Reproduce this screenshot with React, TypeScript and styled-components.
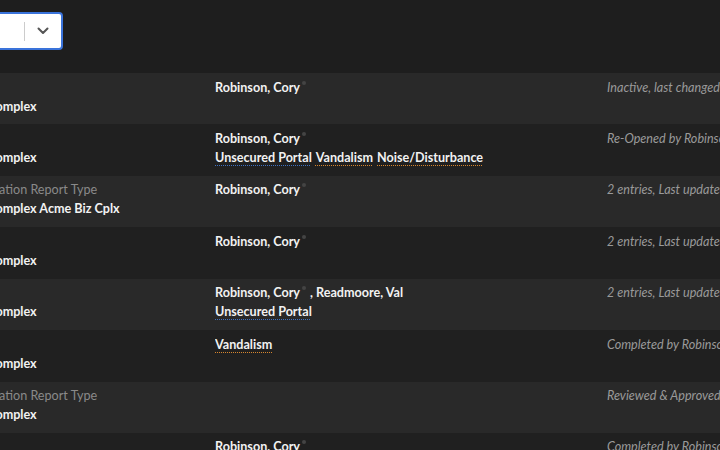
import React from "react";
import styled, { createGlobalStyle } from "styled-components";

const Global = createGlobalStyle`
  html, body {
    margin: 0;
    padding: 0;
    background: #1e1e1e;
    overflow: hidden;
  }
  body {
    font-family: Lato, "Open Sans", "Liberation Sans", sans-serif;
    width: 720px;
    height: 450px;
  }
`;

const Page = styled.div`
  width: 720px;
  height: 450px;
  overflow: hidden;
  background: #1e1e1e;
`;

const Toolbar = styled.div`
  padding: 12px 0 23px;
  margin-left: -120px;
  display: flex;
`;

const Select = styled.div`
  width: 183px;
  height: 38px;
  box-sizing: border-box;
  background: #ffffff;
  border: 2px solid #3a73da;
  border-radius: 4px;
  display: flex;
  align-items: center;
  justify-content: flex-end;
`;

const Divider = styled.span`
  width: 1px;
  height: 19px;
  background: #cccccc;
`;

const Chevron = styled.span`
  width: 36px;
  display: flex;
  justify-content: center;
  align-items: center;
  color: #555555;
`;

const Table = styled.div`
  margin-left: -68px;
  width: 1100px;
`;

const Row = styled.div<{ $alt: boolean }>`
  display: grid;
  grid-template-columns: 283px 392px 1fr;
  height: 51.43px;
  box-sizing: border-box;
  padding-top: 4.5px;
  background: ${(p) => (p.$alt ? "#202020" : "#292929")};
  font-size: 12.6px;
  line-height: 19px;
  white-space: nowrap;
`;

const Cell = styled.div`
  display: flex;
  flex-direction: column;
  overflow: hidden;
`;

const Muted = styled.div`
  color: #8a8a8a;
  font-weight: 400;
  height: 19px;
  margin-left: -3px;
`;

const Strong = styled.div`
  color: #f2f2f2;
  font-weight: 700;
  height: 19px;
  display: flex;
  align-items: center;
  gap: 4px;
`;

const Dot = styled.span`
  display: inline-block;
  width: 4px;
  height: 4px;
  border-radius: 50%;
  background: #444444;
  margin: -9px 0 0 -2px;
`;

const Tag = styled.span<{ $kind: "blue" | "orange" }>`
  color: #f2f2f2;
  font-weight: 700;
  text-decoration: underline dotted
    ${(p) => (p.$kind === "blue" ? "#3f72c2" : "#d7862e")};
  text-underline-offset: 3px;
  text-decoration-thickness: 1px;
`;

const Status = styled.div`
  color: #9a9a9a;
  font-style: italic;
  font-weight: 400;
`;

type TagT = { label: string; kind: "blue" | "orange" };

type RowT = {
  type: string;
  site: string;
  people: string[];
  tags: TagT[];
  status: string;
};

const U: TagT = { label: "Unsecured Portal", kind: "blue" };
const V: TagT = { label: "Vandalism", kind: "orange" };
const N: TagT = { label: "Noise/Disturbance", kind: "orange" };

const VIOLATION = "Housing Violation Report Type";

const rows: RowT[] = [
  { type: "Patrol", site: "Acme Biz Complex", people: ["Robinson, Cory"], tags: [], status: "Inactive, last changed by Robinson, Cory" },
  { type: "Incident", site: "Acme Biz Complex", people: ["Robinson, Cory"], tags: [U, V, N], status: "Re-Opened by Robinson, Cory" },
  { type: VIOLATION, site: "Acme Biz Complex Acme Biz Cplx", people: ["Robinson, Cory"], tags: [], status: "2 entries, Last updated by Robinson, Cory" },
  { type: "Patrol", site: "Acme Biz Complex", people: ["Robinson, Cory"], tags: [], status: "2 entries, Last updated by Robinson, Cory" },
  { type: "Incident", site: "Acme Biz Complex", people: ["Robinson, Cory", "Readmoore, Val"], tags: [U], status: "2 entries, Last updated by Readmoore, Val" },
  { type: "Incident", site: "Acme Biz Complex", people: [], tags: [V], status: "Completed by Robinson, Cory" },
  { type: VIOLATION, site: "Acme Biz Complex", people: [], tags: [], status: "Reviewed & Approved by Robinson, Cory" },
  { type: "Patrol", site: "Acme Biz Complex", people: ["Robinson, Cory"], tags: [], status: "Completed by Robinson, Cory" },
];

function People({ names }: { names: string[] }) {
  return (
    <Strong>
      <span>{names[0]}</span>
      <Dot />
      {names.length > 1 && <span>, {names.slice(1).join(", ")}</span>}
    </Strong>
  );
}

export default function App() {
  return (
    <Page>
      <Global />
      <Toolbar>
        <Select>
          <Divider />
          <Chevron>
            <svg width="12" height="8" viewBox="0 0 12 8" fill="none">
              <path d="M1.5 1.5 L6 6 L10.5 1.5" stroke="currentColor" strokeWidth="2" strokeLinecap="round" strokeLinejoin="round" />
            </svg>
          </Chevron>
        </Select>
      </Toolbar>
      <Table>
        {rows.map((r, i) => (
          <Row key={i} $alt={i % 2 === 1}>
            <Cell>
              <Muted>{r.type}</Muted>
              <Strong>{r.site}</Strong>
            </Cell>
            <Cell>
              {r.people.length > 0 && <People names={r.people} />}
              {r.tags.length > 0 && (
                <Strong>
                  {r.tags.map((t, j) => (
                    <Tag key={j} $kind={t.kind}>
                      {t.label}
                    </Tag>
                  ))}
                </Strong>
              )}
            </Cell>
            <Cell>
              <Status>{r.status}</Status>
            </Cell>
          </Row>
        ))}
      </Table>
    </Page>
  );
}
